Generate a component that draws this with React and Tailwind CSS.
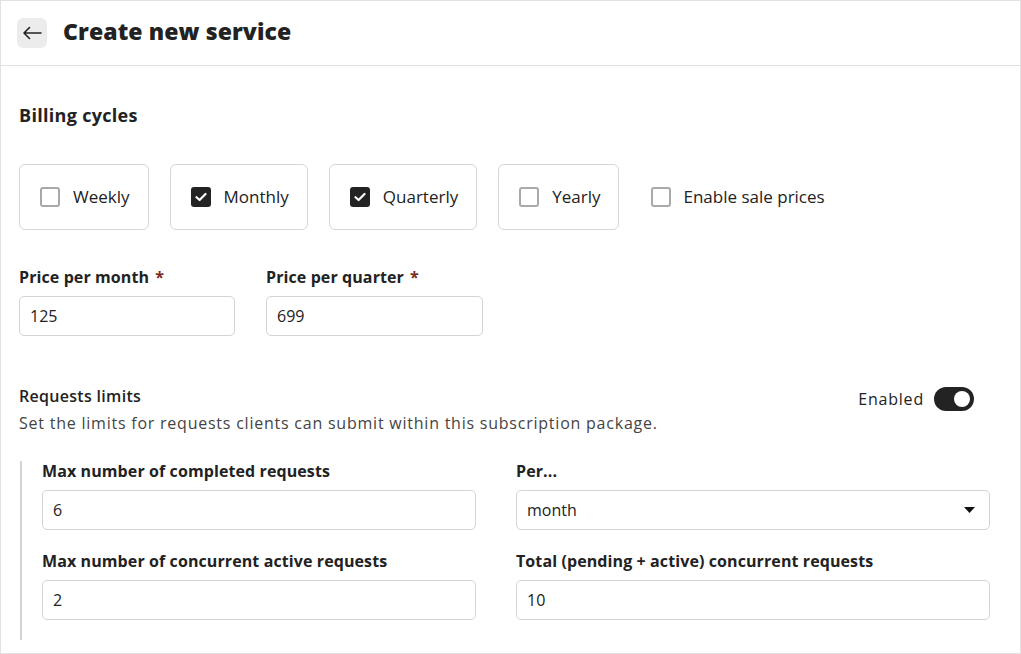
import React from "react";

const font = { fontFamily: "'Open Sans', Lato, sans-serif" };

function Box({ checked }) {
  return checked ? (
    <span className="flex h-5 w-5 shrink-0 items-center justify-center rounded-[3px] bg-[#232323]">
      <svg width="12" height="10" viewBox="0 0 12 10" fill="none">
        <path d="M1.5 5.2 L4.6 8 L10.5 2" stroke="#fff" strokeWidth="2.2" strokeLinecap="round" strokeLinejoin="round" />
      </svg>
    </span>
  ) : (
    <span className="block h-5 w-5 shrink-0 rounded-[3px] border-2 border-[#a9a9a9] bg-white" />
  );
}

function Card({ label, checked }) {
  return (
    <div className="flex h-[66px] items-center gap-[13px] rounded-md border border-[#d6d6d6] pl-[20px] pr-[18px] text-[17px] text-[#222]">
      <Box checked={checked} />
      <span>{label}</span>
    </div>
  );
}

function Field({ label, value, req, className = "" }) {
  return (
    <div className={"flex flex-col gap-[9px] " + className}>
      <div className="text-[16px] font-bold leading-5 tracking-[0.1px] text-[#222]">
        {label}
        {req && <span className="ml-[6px] text-[#7b2a1d]">*</span>}
      </div>
      <div className="flex h-[40px] items-center rounded-[5px] border border-[#d4d4d4] px-[10px] text-[16px] text-[#222]">
        {value}
      </div>
    </div>
  );
}

export default function App() {
  return (
    <div style={font} className="h-[654px] w-[1021px] overflow-hidden border border-[#e2e2e2] bg-white text-[#222]">
      <div className="flex h-[65px] items-center gap-4 border-b border-[#e2e2e2] pl-[16px]">
        <div className="flex h-[30px] w-[30px] items-center justify-center rounded-md bg-[#ececec]">
          <svg width="20" height="14" viewBox="0 0 20 14" fill="none">
            <path d="M19 7 H2 M7.5 1.5 L2 7 L7.5 12.5" stroke="#222" strokeWidth="1.6" strokeLinecap="round" strokeLinejoin="round" />
          </svg>
        </div>
        <h1 className="mb-[3px] text-[23px] font-extrabold tracking-[0.1px] text-[#222]">Create new service</h1>
      </div>

      <div className="px-[18px]">
        <div className="pt-[37px] text-[18px] font-bold leading-6 tracking-[0.3px]">Billing cycles</div>

        <div className="mt-[37px] flex items-center gap-[21px]">
          <Card label="Weekly" />
          <Card label="Monthly" checked />
          <Card label="Quarterly" checked />
          <Card label="Yearly" />
          <div className="ml-[11px] flex items-center gap-[12px] text-[17px]">
            <Box />
            <span>Enable sale prices</span>
          </div>
        </div>

        <div className="mt-[37px] flex gap-[31px]">
          <Field label="Price per month" value="125" req className="w-[216px]" />
          <Field label="Price per quarter" value="699" req className="w-[217px]" />
        </div>

        <div className="mt-[50px] flex items-start justify-between">
          <div>
            <div className="text-[16px] font-semibold leading-5 tracking-[0.3px]">Requests limits</div>
            <div className="mt-[7px] text-[16px] leading-5 tracking-[0.77px] text-[#444]">
              Set the limits for requests clients can submit within this subscription package.
            </div>
          </div>
          <div className="mr-[28px] mt-[1px] flex items-center gap-[10px] text-[16px] tracking-[0.8px]">
            <span>Enabled</span>
            <span className="flex h-6 w-10 items-center justify-end rounded-full bg-[#232323] pr-[4px]">
              <span className="block h-4 w-4 rounded-full bg-white" />
            </span>
          </div>
        </div>

        <div className="mt-[28px] ml-[1px] border-l-2 border-[#d4d4d4] pb-[20px] pl-[20px]">
          <div className="grid grid-cols-[434px_474px] gap-x-[40px] gap-y-[21px]">
            <Field label="Max number of completed requests" value="6" />
            <div className="flex flex-col gap-[9px]">
              <div className="text-[16px] font-bold leading-5 tracking-[0.1px]">Per...</div>
              <div className="flex h-[40px] items-center justify-between rounded-[5px] border border-[#d4d4d4] pl-[10px] pr-[14px] text-[16px]">
                <span>month</span>
                <svg width="11" height="6" viewBox="0 0 11 6"><path d="M0 0 H11 L5.5 6 Z" fill="#111" /></svg>
              </div>
            </div>
            <Field label="Max number of concurrent active requests" value="2" />
            <Field label="Total (pending + active) concurrent requests" value="10" />
          </div>
        </div>
      </div>
    </div>
  );
}
